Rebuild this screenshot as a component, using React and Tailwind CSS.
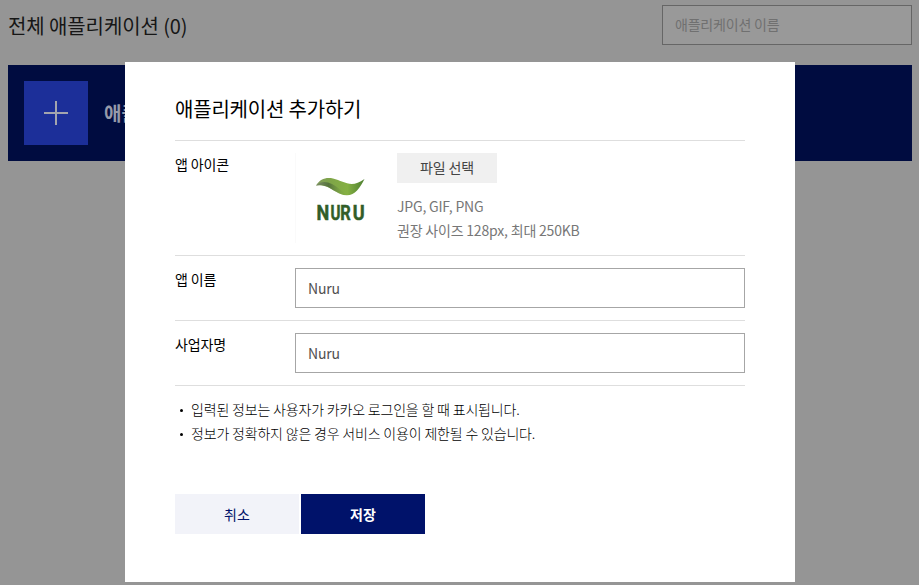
function Logo() {
  return (
    <svg width="64" height="48" viewBox="0 0 64 48" role="img" aria-label="NURU">
      <defs>
        <linearGradient id="leaf" x1="0" y1="0" x2="1" y2="0">
          <stop offset="0" stopColor="#7f9a5c" />
          <stop offset="0.3" stopColor="#7fa548" />
          <stop offset="0.65" stopColor="#85b043" />
          <stop offset="1" stopColor="#4d7f30" />
        </linearGradient>
        <linearGradient id="shade" x1="0" y1="0" x2="1" y2="0">
          <stop offset="0" stopColor="#7d8d68" />
          <stop offset="0.4" stopColor="#55733c" />
          <stop offset="1" stopColor="#85b043" stopOpacity="0" />
        </linearGradient>
      </defs>
      <path d="M8 11.5C12 5 18 3 25 4.500C36 7 43 15 56.500 5C52 14 47 21 39 21.300C28 21 21 9 8 11.500Z" fill="url(#leaf)" />
      <path d="M8 11.500C13 7 18 7 24 10C30 13 34 18 40 21.300C30 21.300 25 15 19 12.500C15 10.800 12 10.500 8 11.500Z" fill="url(#shade)" />
      <g className="fill-[#315d28] stroke-[#315d28] font-['Roboto',sans-serif] text-[20.500px] font-bold" strokeWidth="0.5">
        <text transform="translate(8.400 46) scale(0.88 1)">N</text>
        <text transform="translate(22.600 46) scale(0.74 1)">U</text>
        <text transform="translate(32.300 46) scale(0.8 1)">R</text>
        <text transform="translate(44.800 46) scale(0.88 1)">U</text>
      </g>
    </svg>
  );
}

function Row({ label, className, children }) {
  return (
    <div className={`flex border-t border-[#dedede] pt-3 ${className}`}>
      <div className="-mt-px w-[120px] shrink-0 text-sm leading-6 tracking-[-0.15px] text-black">{label}</div>
      {children}
    </div>
  );
}

function Field({ value }) {
  return (
    <input
      defaultValue={value}
      className="h-10 w-[450px] border border-[#a6a6a6] bg-white px-3 text-sm tracking-[-0.15px] text-[#505050]"
    />
  );
}

export default function App() {
  return (
    <div className="relative h-[585px] w-[919px] overflow-hidden bg-[#959595] font-['Noto_Sans_CJK_KR',sans-serif]">
      <div className="flex h-[65px] items-start justify-between pr-[7px] pl-2 pt-[5px]">
        <h1 className="pt-px text-xl leading-10 tracking-[-0.1px] text-[#161616]">전체 애플리케이션 (0)</h1>
        <input
          placeholder="애플리케이션 이름"
          className="h-10 w-[250px] border border-[#666] bg-[#999] px-3 pb-0.5 text-sm tracking-[-0.2px] placeholder:text-[#707070]"
        />
      </div>
      <div className="mr-[7px] ml-2 flex h-24 items-center bg-[#000c40] pl-4">
        <div className="flex size-16 items-center justify-center bg-[#1c2f99]">
          <svg width="24" height="24" viewBox="0 0 24 24" stroke="#a3a5ae" strokeWidth="2">
            <path d="M12 0V24M0 12H24" />
          </svg>
        </div>
        <span className="ml-4 text-[19px] font-bold text-[#969aaa]">애플리케이션 추가하기</span>
      </div>

      <div className="absolute top-[62px] left-[125px] h-[520px] w-[670px] bg-white px-[50px] pt-[31px]">
        <h2 className="h-[47px] text-xl leading-8 tracking-[-0.2px] text-black">애플리케이션 추가하기</h2>
        <Row label="앱 아이콘" className="h-[115px]">
          <div className="flex h-[90px] w-[102px] items-center border-l border-[#fafafa] pl-3">
            <Logo />
          </div>
          <div>
            <button className="block h-[30px] w-[100px] bg-[#f0f0f0] pb-0.5 text-sm tracking-[-0.15px] text-[#444]">파일 선택</button>
            <p className="mt-[11px] text-sm leading-6 tracking-[-0.2px] text-[#777]">
              JPG, GIF, PNG
              <br />
              권장 사이즈 128px, 최대 250KB
            </p>
          </div>
        </Row>
        <Row label="앱 이름" className="h-[65px]">
          <Field value="Nuru" />
        </Row>
        <Row label="사업자명" className="h-[65px]">
          <Field value="Nuru" />
        </Row>
        <ul className="h-[109px] border-t border-[#dedede] pt-[11px] text-sm leading-6 font-light tracking-[-0.18px] text-black">
          {["입력된 정보는 사용자가 카카오 로그인을 할 때 표시됩니다.", "정보가 정확하지 않은 경우 서비스 이용이 제한될 수 있습니다."].map((note) => (
            <li key={note} className="flex items-center">
              <span className="mt-0.5 mr-2 ml-[5px] size-[3px] rounded-full bg-black" />
              {note}
            </li>
          ))}
        </ul>
        <div className="flex gap-0.5">
          <button className="h-10 w-[124px] bg-[#f2f3f9] pb-px text-sm text-[#00126a]">취소</button>
          <button className="h-10 w-[124px] bg-[#00126a] pb-px text-sm font-bold text-white">저장</button>
        </div>
      </div>
    </div>
  );
}
